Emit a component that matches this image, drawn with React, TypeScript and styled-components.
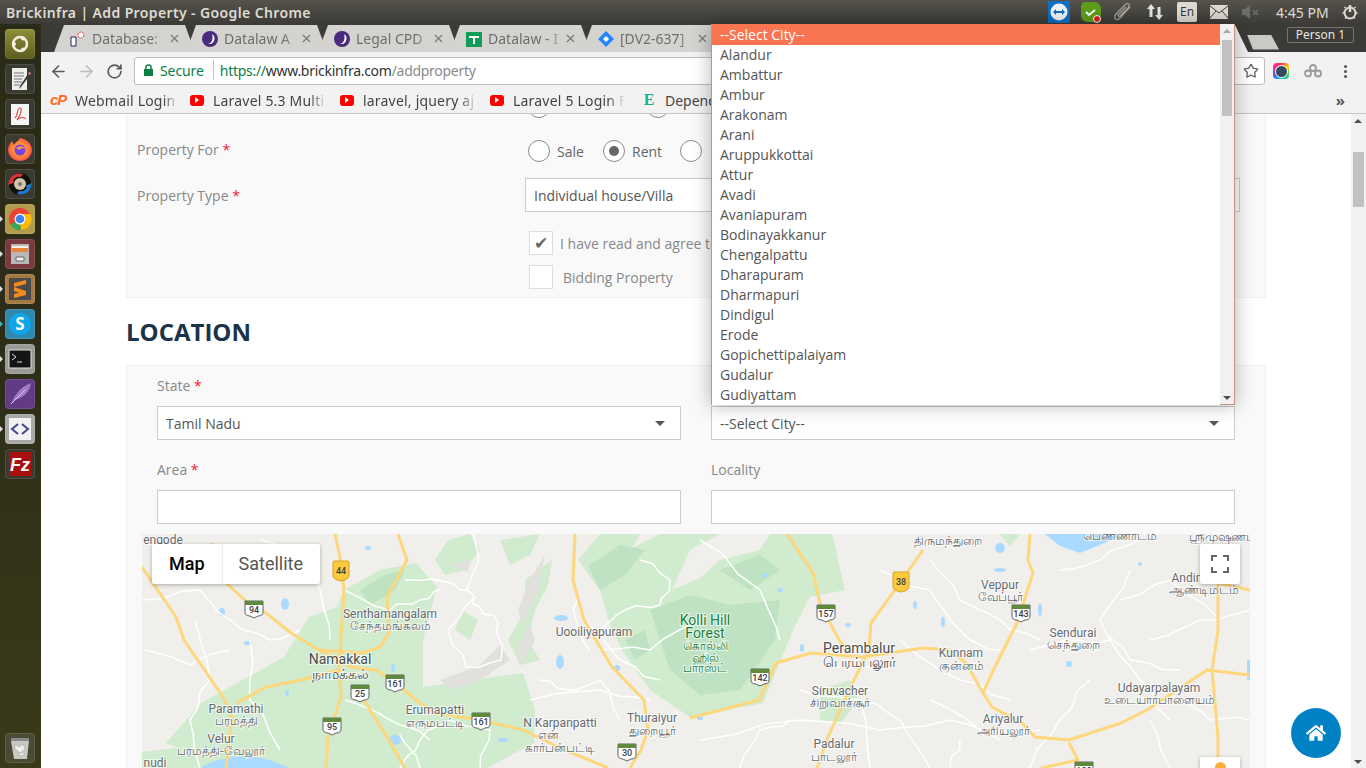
import { type ReactElement, type ReactNode } from "react";
import styled, { createGlobalStyle } from "styled-components";
import { ArrowLeft, ArrowRight, RotateCw, Star, X } from "lucide-react";
import { FaHome } from "react-icons/fa";

const GlobalStyle = createGlobalStyle`
  html, body {
    margin: 0;
    height: 100%;
    overflow: hidden;
    background: #fff;
  }
  * { box-sizing: border-box; }
`;

const UI_FONT = `"Noto Sans", "Open Sans", "Liberation Sans", sans-serif`;
const PAGE_FONT = `"Open Sans", "Noto Sans", sans-serif`;

const Desktop = styled.div`
  position: relative;
  width: 1366px;
  height: 768px;
  overflow: hidden;
  display: flex;
  flex-direction: column;
`;

/* top panel */
const TopPanel = styled.div`
  height: 24px;
  flex: none;
  display: flex;
  align-items: center;
  background: linear-gradient(#55534c, #3c3b37);
  font-family: ${UI_FONT};
`;
const WindowTitle = styled.div`
  margin-left: 6px;
  flex: 1;
  color: #dfdbd2;
  font-size: 14px;
  font-weight: 600;
  letter-spacing: 0.38px;
`;
const TraySlot = styled.div`
  width: 32px;
  height: 24px;
  display: flex;
  align-items: center;
  justify-content: center;
`;
const LangBadge = styled.div`
  width: 20px;
  height: 20px;
  border-radius: 2px;
  background: #dfdbd2;
  color: #3c3b37;
  font-size: 12px;
  text-align: center;
  line-height: 20px;
`;
const Clock = styled.div`
  width: 58px;
  margin-left: 9px;
  color: #dfdbd2;
  font-size: 14px;
`;

const Workspace = styled.div`
  flex: 1;
  display: flex;
  min-height: 0;
`;

/* launcher */
const Launcher = styled.div`
  width: 41px;
  flex: none;
  display: flex;
  flex-direction: column;
  gap: 5px;
  padding: 5px 0 5px 5px;
  background: linear-gradient(#2a2a18, #2c2c18 40%, #3a3a1a);
`;
const Tile = styled.div<{ $bg: string; $pip?: string }>`
  position: relative;
  width: 30px;
  height: 30px;
  flex: none;
  border-radius: 4px;
  background: ${(p) => p.$bg};
  box-shadow: inset 0 0 0 1px rgba(255, 255, 255, 0.1);
  display: flex;
  align-items: center;
  justify-content: center;
  &::before {
    content: "";
    display: ${(p) => (p.$pip ? "block" : "none")};
    position: absolute;
    left: -5px;
    top: 12px;
    border-left: 3px solid ${(p) => p.$pip};
    border-top: 3px solid transparent;
    border-bottom: 3px solid transparent;
  }
`;
const TrashTile = styled(Tile)`
  margin-top: auto;
`;

/* browser chrome */
const Browser = styled.div`
  flex: 1;
  min-width: 0;
  display: flex;
  flex-direction: column;
  font-family: ${UI_FONT};
`;
const TabStrip = styled.div`
  height: 28px;
  flex: none;
  display: flex;
  align-items: flex-end;
  padding-left: 13px;
  background: #3c3b37;
`;
const Tab = styled.div`
  width: 141px;
  height: 27px;
  flex: none;
  margin-right: -9px;
  position: relative;
  display: flex;
  align-items: center;
  padding-left: 16px;
  background: #d5d3d0;
  clip-path: polygon(0 100%, 10px 0, 131px 0, 100% 100%);
`;
const ActiveTab = styled.div`
  flex: 1;
  height: 27px;
  background: #f2f2f2;
  clip-path: polygon(0 100%, 10px 0, calc(100% - 13px) 0, 100% 100%);
`;
const TabIcon = styled.span`
  width: 16px;
  height: 16px;
  flex: none;
  display: flex;
`;
const TabTitle = styled.span`
  margin-left: 6px;
  width: 78px;
  overflow: hidden;
  white-space: nowrap;
  color: #6e6e6e;
  font-size: 14px;
  -webkit-mask-image: linear-gradient(90deg, #000 75%, transparent);
  mask-image: linear-gradient(90deg, #000 75%, transparent);
`;
const TabClose = styled.span`
  position: absolute;
  left: 114px;
  top: 7px;
  display: flex;
  color: #777;
`;
const NewTab = styled.div`
  width: 32px;
  height: 15px;
  flex: none;
  align-self: center;
  margin: 8px 8px 0 -1px;
  background: #cbc9c6;
  clip-path: polygon(0 0, 24px 0, 100% 100%, 6px 100%);
`;
const PersonButton = styled.div`
  width: 67px;
  height: 16px;
  flex: none;
  align-self: flex-start;
  margin: 3px 12px 0 0;
  border: 1px solid #77756f;
  border-radius: 2px;
  color: #e8e6e1;
  font-size: 12px;
  line-height: 14px;
  text-align: center;
`;

const Toolbar = styled.div`
  height: 35px;
  flex: none;
  display: flex;
  align-items: flex-start;
  padding: 5px 0 0 3px;
  background: #f2f2f2;
`;
const NavButton = styled.div<{ $off?: boolean }>`
  width: 28px;
  height: 28px;
  display: flex;
  justify-content: center;
  align-items: center;
  color: ${(p) => (p.$off ? "#bdbdbd" : "#5a5a5a")};
`;
const Omnibox = styled.div`
  width: 1131px;
  height: 28px;
  flex: none;
  margin-left: 6px;
  display: flex;
  align-items: center;
  padding: 0 0 2px 9px;
  background: #fff;
  border: 1px solid #bdbdbd;
  border-radius: 3px;
  font-size: 14px;
  position: relative;
`;
const SecureText = styled.span`
  margin-left: 7px;
  color: #0b8043;
  letter-spacing: -0.1px;
`;
const OmniDivider = styled.span`
  width: 1px;
  height: 20px;
  margin: 0 6px 0 9px;
  background: #c4c4c4;
`;
const UrlText = styled.span`
  letter-spacing: -0.28px;
`;
const UrlScheme = styled.span`
  color: #0b8043;
`;
const UrlHost = styled.span`
  color: #333;
`;
const UrlPath = styled.span`
  color: #8a8a8a;
`;
const OmniStar = styled.span`
  position: absolute;
  right: 5px;
  top: 5px;
  display: flex;
  color: #666;
`;
const ToolbarIcon = styled.div`
  width: 32px;
  height: 28px;
  display: flex;
  justify-content: center;
  align-items: center;
`;
const LensIcon = styled.div`
  width: 16px;
  height: 16px;
  border-radius: 4px;
  background: conic-gradient(#ff2d55, #ffcc00, #34c759, #00c7ff, #5856d6, #ff2d95, #ff2d55);
  display: flex;
  align-items: center;
  justify-content: center;
  &::after {
    content: "";
    width: 11px;
    height: 11px;
    border-radius: 50%;
    background: #34495e;
    box-shadow: 0 0 0 1px #fff;
  }
`;
const MenuDots = styled.div`
  width: 3px;
  height: 3px;
  border-radius: 50%;
  background: #555;
  box-shadow: 0 5px 0 #555, 0 -5px 0 #555;
`;

const BookmarkBar = styled.div`
  height: 27px;
  flex: none;
  display: flex;
  align-items: center;
  padding-left: 9px;
  background: #f2f2f2;
  border-bottom: 1px solid #c6c6c6;
  position: relative;
`;
const Bookmark = styled.div<{ $w: number }>`
  width: ${(p) => p.$w}px;
  flex: none;
  display: flex;
  align-items: center;
  gap: 9px;
  color: #444;
  font-size: 14px;
`;
const BookmarkLabel = styled.span<{ $w: number }>`
  width: ${(p) => p.$w}px;
  overflow: hidden;
  white-space: nowrap;
  letter-spacing: 0.2px;
  -webkit-mask-image: linear-gradient(90deg, #000 85%, transparent);
  mask-image: linear-gradient(90deg, #000 85%, transparent);
`;
const CpanelMark = styled.span`
  width: 16px;
  flex: none;
  color: #ff6c2c;
  font-family: "Liberation Sans", sans-serif;
  font-size: 15px;
  font-weight: 700;
  font-style: italic;
  letter-spacing: -1px;
  line-height: 16px;
`;
const TubeIcon = styled.span`
  width: 14px;
  height: 11px;
  flex: none;
  border-radius: 3px;
  background: #f00;
  display: flex;
  align-items: center;
  justify-content: center;
  &::after {
    content: "";
    border-left: 4px solid #fff;
    border-top: 3px solid transparent;
    border-bottom: 3px solid transparent;
  }
`;
const EvernoteE = styled.span`
  width: 14px;
  flex: none;
  color: #19b394;
  font-family: "Liberation Serif", serif;
  font-weight: 700;
  font-size: 16px;
  text-align: center;
`;
const MoreBookmarks = styled.span`
  position: absolute;
  right: 21px;
  top: 3px;
  color: #555;
  font-size: 15px;
  font-weight: 700;
`;

/* web page */
const Viewport = styled.div`
  flex: 1;
  min-height: 0;
  display: flex;
  background: #fff;
  font-family: ${PAGE_FONT};
  font-size: 14px;
`;
const PageBody = styled.div`
  flex: 1;
  min-width: 0;
  overflow: hidden;
  padding-left: 85px;
`;
const Scrollbar = styled.div`
  width: 15px;
  flex: none;
  position: relative;
  background: #f1f1f1;
`;
const ScrollThumb = styled.div<{ $top: number; $h: number }>`
  position: absolute;
  left: 2px;
  right: 2px;
  top: ${(p) => p.$top}px;
  height: ${(p) => p.$h}px;
  background: #c1c1c1;
`;
const ScrollArrow = styled.div<{ $down?: boolean; $color?: string }>`
  position: absolute;
  left: 3px;
  ${(p) => (p.$down ? "bottom: 4px;" : "top: 5px;")}
  border-left: 4px solid transparent;
  border-right: 4px solid transparent;
  ${(p) => (p.$down ? "border-top" : "border-bottom")}: 4px solid ${(p) => p.$color ?? "#505050"};
`;

const Panel = styled.div`
  width: 1140px;
  background: #f9f9f9;
  border: 1px solid #f1f1f1;
`;
const PropertyPanel = styled(Panel)`
  margin-top: -30px;
  height: 214px;
  padding: 0 10px;
`;
const FormRow = styled.div<{ $h: number }>`
  height: ${(p) => p.$h}px;
  display: grid;
  grid-template-columns: 388px 1fr;
  align-items: center;
`;
const RowLabel = styled.div<{ $raised?: boolean }>`
  color: #888;
  padding-bottom: ${(p) => (p.$raised ? 4 : 0)}px;
`;
const Required = styled.span`
  color: #f0203a;
`;
const RadioGroup = styled.div`
  display: flex;
  align-items: center;
  padding-left: 3px;
`;
const Radio = styled.span<{ $on?: boolean }>`
  width: 22px;
  height: 22px;
  flex: none;
  border-radius: 50%;
  background: #fff;
  border: 1px solid #8c8c8c;
  display: flex;
  align-items: center;
  justify-content: center;
  &::after {
    content: "";
    display: ${(p) => (p.$on ? "block" : "none")};
    width: 10px;
    height: 10px;
    border-radius: 50%;
    background: #666;
  }
`;
const RadioText = styled.span<{ $w: number }>`
  width: ${(p) => p.$w}px;
  padding-left: 7px;
  color: #666;
`;
const Select = styled.div`
  height: 34px;
  display: flex;
  align-items: center;
  justify-content: space-between;
  padding: 0 15px 0 8px;
  background: #fff;
  border: 1px solid #ccc;
  color: #555;
  &::after {
    content: "";
    border-top: 5px solid #555;
    border-left: 5px solid transparent;
    border-right: 5px solid transparent;
  }
`;
const PropertySelect = styled(Select)`
  width: 715px;
`;
const CheckList = styled.div`
  display: flex;
  flex-direction: column;
  gap: 10px;
  margin: 15px 0 0 392px;
`;
const CheckRow = styled.div<{ $gap: number }>`
  display: flex;
  align-items: center;
  height: 24px;
  gap: ${(p) => p.$gap}px;
  color: #888;
  white-space: nowrap;
`;
const CheckBox = styled.span`
  width: 24px;
  height: 24px;
  flex: none;
  background: #fff;
  border: 1px solid #ddd;
  color: #666;
  font-size: 17px;
  line-height: 22px;
  text-align: center;
  font-family: "DejaVu Sans", sans-serif;
`;
const SectionTitle = styled.h2`
  margin: 18px 0 17px 0;
  height: 32px;
  color: #1c3349;
  font-size: 24px;
  line-height: 32px;
  font-weight: 700;
`;
const LocationPanel = styled(Panel)`
  padding: 10px 15px 0;
`;
const FieldGrid = styled.div`
  display: grid;
  grid-template-columns: 524px 524px;
  column-gap: 30px;
  row-gap: 20px;
  padding: 0 15px;
`;
const Field = styled.div`
  display: flex;
  flex-direction: column;
  gap: 10px;
`;
const FieldLabel = styled.div`
  height: 20px;
  line-height: 20px;
  color: #888;
`;
const TextInput = styled.div`
  height: 34px;
  background: #fff;
  border: 1px solid #ccc;
`;

/* map */
const MapFrame = styled.div`
  position: relative;
  height: 260px;
  margin-top: 10px;
  overflow: hidden;
  background: #f1efec;
  font-family: Roboto, sans-serif;
`;
const MapCanvas = styled.svg`
  display: block;
  width: 1108px;
  height: 260px;
`;
const MapLabel = styled.text<{ $forest?: boolean; $big?: boolean }>`
  font-family: Roboto, "Noto Sans", sans-serif;
  font-size: ${(p) => (p.$big ? 14 : 12)}px;
  fill: ${(p) => (p.$forest ? "#188038" : p.$big ? "#4a4d50" : "#666a6e")};
  stroke: #fff;
  stroke-width: 2px;
  stroke-opacity: 0.7;
  paint-order: stroke;
  text-anchor: middle;
  dominant-baseline: central;
`;
const ShieldText = styled.text`
  font-family: Roboto, sans-serif;
  font-size: 9px;
  font-weight: 500;
  fill: #3c4043;
  text-anchor: middle;
`;
const MapTypeBar = styled.div`
  position: absolute;
  left: 10px;
  top: 10px;
  height: 40px;
  display: flex;
  background: #fff;
  border-radius: 2px;
  box-shadow: 0 1px 4px rgba(0, 0, 0, 0.3);
  font-size: 18px;
  line-height: 40px;
`;
const MapTypeButton = styled.div<{ $on?: boolean }>`
  padding: 0 17px;
  color: ${(p) => (p.$on ? "#000" : "#565656")};
  font-weight: ${(p) => (p.$on ? 500 : 400)};
  box-shadow: ${(p) => (p.$on ? "none" : "inset 1px 0 #eee")};
`;
const MapControl = styled.div`
  position: absolute;
  left: 1058px;
  width: 40px;
  height: 40px;
  background: #fff;
  border-radius: 2px;
  box-shadow: 0 1px 4px rgba(0, 0, 0, 0.3);
  display: flex;
  justify-content: center;
`;
const FullscreenControl = styled(MapControl)`
  top: 10px;
  align-items: center;
`;
const PegmanControl = styled(MapControl)`
  top: 223px;
  padding-top: 5px;
  &::after {
    content: "";
    width: 11px;
    height: 11px;
    border-radius: 50%;
    background: #fbb03b;
  }
`;

/* overlays */
const CityDropdown = styled.div`
  position: absolute;
  left: 711px;
  top: 24px;
  width: 524px;
  height: 381px;
  display: flex;
  background: #fff;
  border: 1px solid #c9907f;
  border-top: 0;
  box-shadow: 0 0 18px rgba(0, 0, 0, 0.3);
  font-family: ${PAGE_FONT};
  font-size: 14px;
`;
const OptionList = styled.div`
  flex: 1;
  min-width: 0;
`;
const Option = styled.div<{ $on?: boolean }>`
  height: ${(p) => (p.$on ? 21 : 20)}px;
  padding-left: 8px;
  line-height: ${(p) => (p.$on ? 21 : 20)}px;
  color: ${(p) => (p.$on ? "#fff" : "#555")};
  background: ${(p) => (p.$on ? "#f97450" : "#fff")};
`;
const OptionScroll = styled(Scrollbar)`
  width: 14px;
`;
const HomeButton = styled.div`
  position: absolute;
  left: 1291px;
  top: 708px;
  width: 50px;
  height: 50px;
  border-radius: 50%;
  background: #0081c6;
  color: #fff;
  display: flex;
  align-items: center;
  justify-content: center;
`;

const CITIES = [
  "--Select City--", "Alandur", "Ambattur", "Ambur", "Arakonam", "Arani", "Aruppukkottai", "Attur", "Avadi",
  "Avaniapuram", "Bodinayakkanur", "Chengalpattu", "Dharapuram", "Dharmapuri", "Dindigul", "Erode",
  "Gopichettipalaiyam", "Gudalur", "Gudiyattam",
];

const YELLOW_ROADS = [
  "142,567 176,617 184,640 223,697 232,717 226,768",
  "335,534 341,563 344,590 341,637 339,667 341,697 328,737 326,768",
  "212,543 226,583 248,603 266,613 291,633 319,650 351,667 376,670 394,682 416,700 434,713 480,720 523,730 558,747 608,768",
  "398,534 407,560 387,597 389,633 380,647 362,653 319,650",
  "339,670 301,680 266,687 237,703",
  "362,697 387,737 405,768",
  "575,534 573,580 584,620 612,667 644,700 648,730 641,750 630,768",
  "787,534 813,573 821,607 841,643 852,652",
  "923,550 897,587 871,623 869,650 854,680 828,737 817,768",
  "690,718 759,700 765,687 776,663 811,653 862,657 923,648 949,650 966,663 983,693 992,707 1022,723 1035,737 1069,740 1121,723 1147,710 1207,670 1250,675",
  "1030,534 1028,560 1033,573 1017,623 992,673 983,693",
  "1218,563 1218,630 1212,670 1218,737 1218,768",
  "1069,743 1078,760 1041,768",
  "1218,583 1250,590",
];

const WHITE_ROADS = [
  "260,540 300,560 320,590 330,640", "142,600 200,590 230,620 270,640 300,630", "195,620 210,680 190,720 200,768",
  "344,590 390,610 420,600 440,590", "590,625 620,660 660,680", "600,650 650,650 700,620",
  "480,768 490,730 450,720 420,740 400,768", "530,700 600,690 650,700", "345,700 390,720 430,740",
  "700,540 760,590 780,640", "880,570 930,590 950,620 970,640 1000,650", "930,560 960,600 1000,620 1040,640",
  "900,640 960,680 1010,700", "1030,650 1080,640 1110,640 1140,680 1170,720", "1090,680 1060,720 1030,768",
  "1120,600 1170,580 1220,620", "1150,640 1200,620 1250,610", "1130,570 1100,620 1130,660 1180,670",
  "700,740 800,720 880,730 950,720 1000,740", "960,740 950,768", "1150,720 1170,768", "860,700 900,720 930,768",
  "740,768 760,730 790,720", "1180,700 1210,720 1250,720", "930,700 980,730 1040,730",
  "473,534 478,563 467,590 480,607 498,623 501,660 466,667 448,630 476,597", "405,580 451,583 467,590",
  "574,585 576,620 590,650", "600,630 625,610 660,605 670,580 640,560", "145,650 190,665 230,650", "250,640 250,700 280,750",
  "400,735 420,768", "540,680 570,690 600,680 620,720", "1060,570 1100,560 1140,540", "800,690 860,700 870,768",
];

const WATER = [
  [285, 604, 4, 6], [222, 612, 3, 4], [248, 643, 4, 2], [393, 668, 2, 4], [287, 693, 2, 3], [368, 548, 3, 2],
  [561, 618, 7, 3], [560, 662, 4, 7], [617, 668, 3, 3], [395, 740, 6, 5], [503, 740, 5, 2], [765, 575, 3, 2],
  [780, 590, 3, 2], [848, 625, 3, 2], [943, 622, 2, 5], [915, 605, 2, 4], [1000, 570, 6, 2], [1040, 610, 2, 7],
  [1060, 540, 2, 4], [1069, 664, 3, 3], [802, 648, 2, 4], [700, 718, 3, 2], [1000, 548, 5, 5], [1140, 564, 2, 2],
];

const PALE_PATCHES = [
  "M344 590L380 570 416 563 437 587 423 640 423 687 523 673 535 710 534 743 487 768H226L166 743 201 703 284 657 309 617 337 607Z",
  "M578 560L600 534H640L632 548 660 534H720L690 550 672 590 700 578 720 560 760 550 770 534H832L845 590 810 597 793 630 763 703 690 717 650 690 622 650 610 625 600 590Z",
  "M448 540L470 534 480 550 465 570 445 575 435 560Z",
  "M500 540L540 534 530 555 510 565Z",
  "M525 580L552 560 548 585 535 610 528 640 540 660 520 665 508 640 525 610Z",
  "M142 752L200 745 226 768H142Z",
  "M820 690L850 680 858 700 840 725 820 720Z",
  "M1000 534H1020L1010 546Z",
  "M462 610L478 620 470 640 455 630Z",
];

const DARK_PATCHES = [
  "M588 566L620 545 645 550 625 575 600 590Z",
  "M650 610L690 595 730 605 780 600 775 640 740 690 700 695 670 670Z",
  "M625 640L645 630 650 650 635 660Z",
  "M360 590L385 575 405 570 395 590 370 605Z",
  "M720 570L760 555 780 570 750 590Z",
];

const TERRAIN_PATCHES = [
  "M440 680L480 665 500 645 510 660 480 680 450 690Z",
  "M530 580L545 555 538 590 522 625 518 610Z",
  "M450 565L470 560 468 572Z",
  "M516 650L530 625 535 640 522 665Z",
];

/* breaks a road into short wobbling pieces so it does not read as a ruler line */
function wobble(points: string): string {
  const pts = points.split(" ").map((p) => p.split(",").map(Number));
  const out: string[] = [];
  pts.forEach(([x, y], i) => {
    out.push(`${x},${y}`);
    const next = pts[i + 1];
    if (!next) return;
    for (let k = 1; k < 3; k += 1) {
      const t = k / 3;
      const dx = Math.sin(x * 0.7 + k * 2.1) * 3;
      const dy = Math.cos(y * 0.9 + k * 1.3) * 3;
      out.push(`${x + (next[0] - x) * t + dx},${y + (next[1] - y) * t + dy}`);
    }
  });
  return out.join(" ");
}

const LABELS: { x: number; y: number; t: string; big?: boolean; forest?: boolean }[] = [
  { x: 163, y: 540, t: "engode" }, { x: 390, y: 614, t: "Senthamangalam" }, { x: 390, y: 626, t: "சேந்தமங்கலம்" },
  { x: 340, y: 659, t: "Namakkal", big: true }, { x: 340, y: 674, t: "நாமக்கல்", big: true },
  { x: 236, y: 709, t: "Paramathi" }, { x: 236, y: 721, t: "பரமத்தி" }, { x: 221, y: 739, t: "Velur" },
  { x: 221, y: 751, t: "பரமத்தி-வேலூர்" }, { x: 155, y: 763, t: "nudi" }, { x: 594, y: 632, t: "Uooiliyapuram" },
  { x: 435, y: 710, t: "Erumapatti" }, { x: 435, y: 723, t: "எருமபட்டி" }, { x: 560, y: 723, t: "N Karpanpatti" },
  { x: 548, y: 735, t: "என்" }, { x: 560, y: 748, t: "கார்பன்பட்டி" }, { x: 652, y: 718, t: "Thuraiyur" },
  { x: 652, y: 731, t: "துறையூர்" }, { x: 705, y: 620, t: "Kolli Hill", forest: true, big: true },
  { x: 705, y: 633, t: "Forest", forest: true, big: true }, { x: 705, y: 646, t: "கொல்லி", forest: true },
  { x: 705, y: 658, t: "ஹில்", forest: true }, { x: 705, y: 668, t: "பாரஸ்ட்", forest: true },
  { x: 859, y: 648, t: "Perambalur", big: true }, { x: 859, y: 662, t: "பெரம்பலூர்", big: true },
  { x: 961, y: 653, t: "Kunnam" }, { x: 961, y: 666, t: "குன்னம்" }, { x: 840, y: 691, t: "Siruvacher" },
  { x: 840, y: 703, t: "சிறுவாச்சூர்" }, { x: 834, y: 744, t: "Padalur" }, { x: 834, y: 757, t: "பாடலூர்" },
  { x: 1000, y: 585, t: "Veppur" }, { x: 1000, y: 597, t: "வேப்பூர்" }, { x: 1073, y: 633, t: "Sendurai" },
  { x: 1073, y: 645, t: "செந்துறை" }, { x: 1159, y: 688, t: "Udayarpalayam" }, { x: 1159, y: 700, t: "உடையார்பாளையம்" },
  { x: 1003, y: 719, t: "Ariyalur" }, { x: 1003, y: 731, t: "அரியலூர்" }, { x: 1204, y: 578, t: "Andimadam" },
  { x: 1204, y: 590, t: "ஆண்டிமடம்" }, { x: 948, y: 541, t: "திருமந்துறை" }, { x: 1120, y: 536, t: "பெண்ணாடம்" },
  { x: 1222, y: 537, t: "ஸ்ரீமுஷ்ணம்" },
];

const NH_SHIELDS = [
  { x: 254, y: 609, n: "94" }, { x: 395, y: 683, n: "161" }, { x: 360, y: 693, n: "25" }, { x: 332, y: 726, n: "95" },
  { x: 481, y: 721, n: "161" }, { x: 627, y: 752, n: "30" }, { x: 760, y: 677, n: "142" }, { x: 826, y: 613, n: "157" },
  { x: 1021, y: 613, n: "143" }, { x: 1084, y: 770, n: "100" },
];

function NhShield({ x, y, n }: { x: number; y: number; n: string }): ReactElement {
  return (
    <g transform={`translate(${x} ${y})`}>
      <path d="M-9 -8H9V3Q9 7 4 7L0 9L-4 7Q-9 7 -9 3Z" fill="#fff" stroke="#5f6368" />
      <path d="M-9 -8H9V-4H-9Z" fill="#5f8a3c" />
      <ShieldText y={4}>{n}</ShieldText>
    </g>
  );
}

function StateShield({ x, y, n }: { x: number; y: number; n: string }): ReactElement {
  return (
    <g transform={`translate(${x} ${y})`}>
      <path d="M-7 -10H7Q8 -10 8 -8V5Q8 7 4 9L0 10L-4 9Q-8 7 -8 5V-8Q-8 -10 -7 -10Z" fill="#fdc93e" stroke="#d9a520" />
      <ShieldText y={3}>{n}</ShieldText>
    </g>
  );
}

function MapArt(): ReactElement {
  return (
    <MapCanvas viewBox="142 534 1108 260">
      <rect x="142" y="534" width="1108" height="260" fill="#f1efec" />
      <g fill="#d0ebcd">
        {PALE_PATCHES.map((d) => (
          <path key={d} d={d} />
        ))}
      </g>
      <g fill="#bfe3c2">
        {DARK_PATCHES.map((d) => (
          <path key={d} d={d} />
        ))}
      </g>
      <g fill="#e2e0dc">
        {TERRAIN_PATCHES.map((d) => (
          <path key={d} d={d} />
        ))}
      </g>
      <g fill="#aadaff">
        {WATER.map(([cx, cy, rx, ry]) => (
          <ellipse key={`${cx}-${cy}`} cx={cx} cy={cy} rx={rx} ry={ry} />
        ))}
        <path d="M1045 534H1125L1100 545 1080 553 1060 546Z" />
        <path d="M200 768Q230 750 270 760L290 768Z" />
        <path d="M1247 660H1250V680H1247Z" />
      </g>
      <g fill="none" stroke="#fff" strokeWidth="1.5" strokeLinejoin="round">
        {WHITE_ROADS.map((pts) => (
          <polyline key={pts} points={wobble(pts)} />
        ))}
      </g>
      <g fill="none" stroke="#fdd77c" strokeWidth="3" strokeLinejoin="round">
        {YELLOW_ROADS.map((pts) => (
          <polyline key={pts} points={pts} />
        ))}
      </g>
      {LABELS.map((l) => (
        <MapLabel key={l.t} x={l.x} y={l.y} $big={l.big} $forest={l.forest}>
          {l.t}
        </MapLabel>
      ))}
      {NH_SHIELDS.map((s) => (
        <NhShield key={`${s.x}`} {...s} />
      ))}
      <StateShield x={341} y={571} n="44" />
      <StateShield x={901} y={582} n="38" />
    </MapCanvas>
  );
}

function LauncherIcons(): ReactElement {
  return (
    <>
      <Tile $bg="linear-gradient(#8f8f3a,#5c5c1c)">
        <svg width="22" height="22" viewBox="0 0 22 22">
          <circle cx="11" cy="11" r="7" fill="none" stroke="#f3f0e0" strokeWidth="2.5" />
          <circle cx="5" cy="11" r="2" fill="#f3f0e0" />
          <circle cx="14" cy="5.5" r="2" fill="#f3f0e0" />
          <circle cx="14" cy="16.5" r="2" fill="#f3f0e0" />
        </svg>
      </Tile>
      <Tile $bg="#3a3a30">
        <svg width="24" height="26" viewBox="0 0 24 26">
          <path d="M4 2H19V24H4Z" fill="#eeeeea" />
          <path d="M6 7H16M6 10H16M6 13H14M6 16H14M6 19H12" stroke="#777" />
          <path d="M22 9L13 21 11 23 12 20 20 8Z" fill="#333" />
          <path d="M22 9L20 8 21 6 23 7Z" fill="#d88" />
        </svg>
      </Tile>
      <Tile $bg="#3a3a30">
        <svg width="24" height="26" viewBox="0 0 24 26">
          <path d="M3 3H21V24H3Z" fill="#f4f4f4" />
          <path d="M7 17C10 14 9 7 12 7S12 15 9 19C13 15 17 17 18 18" fill="none" stroke="#d22" strokeWidth="1" />
        </svg>
      </Tile>
      <Tile $bg="#3c3c30">
        <svg width="26" height="26" viewBox="0 0 26 26">
          <defs>
            <radialGradient id="fx" cx="0.5" cy="0.5" r="0.6">
              <stop offset="0" stopColor="#ffbd3f" />
              <stop offset="0.7" stopColor="#ff7139" />
              <stop offset="1" stopColor="#e31587" />
            </radialGradient>
          </defs>
          <path d="M13 2C20 3 25 8 25 14A12 11 0 0 1 1 14C1 10 3 7 5 5L7 9C9 5 12 5 13 2Z" fill="url(#fx)" />
          <circle cx="13" cy="14" r="5.5" fill="#7542e5" />
          <path d="M9 12Q15 8 19 13Q15 11 12 14Z" fill="#ff9640" />
        </svg>
      </Tile>
      <Tile $bg="#3a3a30">
        <svg width="26" height="26" viewBox="0 0 26 26">
          <circle cx="13" cy="13" r="11" fill="#111" />
          <circle cx="13" cy="13" r="6" fill="#cfc7a8" />
          <circle cx="13" cy="13" r="2" fill="#777" />
          <path d="M2 10C4 4 10 1 16 3L14 6C10 5 7 7 6 10L8 11 1 14Z" fill="#d33" />
          <path d="M24 16C22 22 16 25 10 23L12 20C16 21 19 19 20 16L18 15 25 12Z" fill="#27c" />
        </svg>
      </Tile>
      <Tile $bg="#b29c4c" $pip="#ddd">
        <svg width="24" height="24" viewBox="0 0 24 24">
          <circle cx="12" cy="12" r="11" fill="#ea4335" />
          <path d="M12 12L2.5 17.5A11 11 0 0 0 13 23Z" fill="#34a853" />
          <path d="M12 12L13 23A11 11 0 0 0 22.5 7H12Z" fill="#fbbc05" />
          <circle cx="12" cy="12" r="5.5" fill="#fff" />
          <circle cx="12" cy="12" r="4.3" fill="#4285f4" />
        </svg>
      </Tile>
      <Tile $bg="#7a3a3e" $pip="#ddd">
        <svg width="22" height="24" viewBox="0 0 22 24">
          <path d="M2 2H20V22H2Z" fill="#b8b8b8" />
          <path d="M3 4H19V10H3Z" fill="#e8843c" />
          <path d="M3 4H19V6H3Z" fill="#f4f0e8" />
          <path d="M7 15H15V19H7Z" fill="#eee" stroke="#666" />
        </svg>
      </Tile>
      <Tile $bg="#a47a42" $pip="#ddd">
        <svg width="24" height="24" viewBox="0 0 24 24">
          <path d="M1 1H23V23H1Z" fill="#4a4a4a" />
          <path d="M6 10V6L18 3V7ZM6 10L18 14V18L6 14ZM6 17L18 14V18L6 21Z" fill="#f58a1f" />
        </svg>
      </Tile>
      <Tile $bg="#2f89ad" $pip="#4ab">
        <svg width="24" height="24" viewBox="0 0 24 24">
          <circle cx="12" cy="12" r="11" fill="#0ea5e9" />
          <text x="12" y="18" fontSize="17" fontWeight="700" fill="#fff" textAnchor="middle" fontFamily="Open Sans, sans-serif">
            S
          </text>
        </svg>
      </Tile>
      <Tile $bg="#9a9a96" $pip="#ddd">
        <svg width="24" height="20" viewBox="0 0 24 20">
          <path d="M1 1H23V19H1Z" fill="#141414" stroke="#ddd" />
          <path d="M4 5L8 8 4 11" fill="none" stroke="#ddd" />
          <path d="M9 13H14" stroke="#ddd" />
        </svg>
      </Tile>
      <Tile $bg="#633b85">
        <svg width="24" height="24" viewBox="0 0 24 24">
          <path d="M3 22C6 14 12 5 23 1C22 9 15 17 6 18Z" fill="#9f7cc4" />
          <path d="M3 22L17 8" stroke="#d8c8e8" />
        </svg>
      </Tile>
      <Tile $bg="#a8a8a6" $pip="#ddd">
        <svg width="24" height="24" viewBox="0 0 24 24">
          <path d="M1 1H23V23H1Z" fill="#f2f2f4" />
          <path d="M10 7L4 12 10 17M14 7L20 12 14 17" fill="none" stroke="#44448c" strokeWidth="2" />
        </svg>
      </Tile>
      <Tile $bg="#3a3a30">
        <svg width="24" height="26" viewBox="0 0 24 26">
          <path d="M1 1H23V25H1Z" fill="#a80f0f" />
          <text x="12" y="20" fontSize="18" fontWeight="700" fontStyle="italic" fill="#fff" textAnchor="middle" fontFamily="Liberation Sans, sans-serif">
            Fz
          </text>
        </svg>
      </Tile>
      <TrashTile $bg="#4b4b34">
        <svg width="22" height="26" viewBox="0 0 22 26">
          <path d="M2 3H20V6L18 24H5L2 6Z" fill="#c8c8c4" />
          <path d="M2 3H20V6H2Z" fill="#888" />
          <path d="M6 9L10 12 14 9 16 14 11 18 6 14ZM8 19L13 21 16 18" fill="#f0f0ee" stroke="#999" strokeWidth="0.5" />
        </svg>
      </TrashTile>
    </>
  );
}

const Crescent = (
  <svg width="16" height="16" viewBox="0 0 16 16">
    <circle cx="8" cy="8" r="8" fill="#4a2a7f" />
    <path d="M10 3A5.5 5.5 0 0 1 6 13C10 12.5 11.5 7 10 3Z" fill="#fff" />
  </svg>
);

const TABS: { title: string; icon: ReactNode }[] = [
  {
    title: "Database:",
    icon: (
      <svg width="16" height="16" viewBox="0 0 16 16">
        <path d="M1 6H6V15H1Z" fill="#fff" stroke="#226" />
        <circle cx="11" cy="4" r="3" fill="#fff" stroke="#d33" strokeDasharray="2 1" />
      </svg>
    ),
  },
  { title: "Datalaw A", icon: Crescent },
  { title: "Legal CPD", icon: Crescent },
  {
    title: "Datalaw - I",
    icon: (
      <svg width="16" height="16" viewBox="0 0 16 16">
        <path d="M0 1H16V16H0Z" fill="#0f9d58" />
        <path d="M3 5H13V7H9V13H7V7H3Z" fill="#fff" />
      </svg>
    ),
  },
  {
    title: "[DV2-637]",
    icon: (
      <svg width="16" height="16" viewBox="0 0 16 16">
        <path d="M8 0L16 8 8 16 0 8Z" fill="#2684ff" />
        <path d="M8 5L11 8 8 11 5 8Z" fill="#fff" />
      </svg>
    ),
  },
];

export default function App(): ReactElement {
  return (
    <Desktop>
      <GlobalStyle />
      <TopPanel>
        <WindowTitle>Brickinfra | Add Property - Google Chrome</WindowTitle>
        <TraySlot>
          <svg width="22" height="22" viewBox="0 0 22 22">
            <path d="M0 0H22V22H0Z" fill="#0e6fc4" />
            <circle cx="11" cy="11" r="8.5" fill="#eef5fb" />
            <path d="M5 11L8 8V10H14V8L17 11 14 14V12H8V14Z" fill="#0e6fc4" />
          </svg>
        </TraySlot>
        <TraySlot>
          <svg width="22" height="22" viewBox="0 0 22 22">
            <path d="M1 6Q1 1 6 1H14Q21 1 21 9V14Q21 21 14 21H8Q1 21 1 14Z" fill="#5d9f1a" />
            <path d="M6 11L9 14 15 9" fill="none" stroke="#fff" strokeWidth="2" />
            <circle cx="17" cy="18" r="3.5" fill="#e51c1c" stroke="#fff" />
          </svg>
        </TraySlot>
        <TraySlot>
          <svg width="20" height="20" viewBox="0 0 20 20">
            <path d="M17 5L7 16Q4 19 2 16.500Q1 14 3 12L13 2Q15 1 16 2.500Q17 4 15 6L7 14Q5 15 5 13L13 5" fill="none" stroke="#a5a39c" strokeWidth="1.2" />
          </svg>
        </TraySlot>
        <TraySlot>
          <svg width="18" height="18" viewBox="0 0 18 18">
            <path d="M5 1L9 6H6.500V14H3.500V6H1ZM13 17L9 12H11.500V4H14.500V12H17Z" fill="#e8e6e1" />
          </svg>
        </TraySlot>
        <TraySlot>
          <LangBadge>En</LangBadge>
        </TraySlot>
        <TraySlot>
          <svg width="18" height="14" viewBox="0 0 18 14">
            <path d="M0 0H18V14H0Z" fill="#dfdbd2" />
            <path d="M0 1L9 8 18 1M0 13L6 6M18 13L12 6" fill="none" stroke="#3c3b37" />
          </svg>
        </TraySlot>
        <TraySlot>
          <svg width="18" height="14" viewBox="0 0 18 14">
            <path d="M0 4H3L8 0V14L3 10H0Z" fill="#6c6b65" />
            <path d="M11 5L16 10M16 5L11 10" stroke="#6c6b65" strokeWidth="1.6" />
          </svg>
        </TraySlot>
        <Clock>4:45 PM</Clock>
        <TraySlot>
          <svg width="18" height="18" viewBox="0 0 18 18">
            <circle cx="9" cy="10" r="5.500" fill="none" stroke="#dfdbd2" strokeWidth="2" />
            <path d="M9 2V9" stroke="#dfdbd2" strokeWidth="2.500" />
            <path d="M1.500 10H3M15 10H16.500M3.500 4L4.500 5M14.500 4L13.500 5M4 15.500L5 14.500M14 15.500L13 14.500" stroke="#dfdbd2" strokeWidth="1.600" />
          </svg>
        </TraySlot>
      </TopPanel>
      <Workspace>
        <Launcher>
          <LauncherIcons />
        </Launcher>
        <Browser>
          <TabStrip>
            {TABS.map((tab) => (
              <Tab key={tab.title}>
                <TabIcon>{tab.icon}</TabIcon>
                <TabTitle>{tab.title}</TabTitle>
                <TabClose>
                  <X size={13} />
                </TabClose>
              </Tab>
            ))}
            <ActiveTab />
            <NewTab />
            <PersonButton>Person 1</PersonButton>
          </TabStrip>
          <Toolbar>
            <NavButton>
              <ArrowLeft size={19} />
            </NavButton>
            <NavButton $off>
              <ArrowRight size={19} />
            </NavButton>
            <NavButton>
              <RotateCw size={17} strokeWidth={2.4} />
            </NavButton>
            <Omnibox>
              <svg width="9" height="12" viewBox="0 0 9 12">
                <path d="M0 5H9V12H0Z" fill="#0b8043" />
                <path d="M2 5V3Q2 1 4.500 1T7 3V5" fill="none" stroke="#0b8043" strokeWidth="1.500" />
              </svg>
              <SecureText>Secure</SecureText>
              <OmniDivider />
              <UrlText>
                <UrlScheme>https://</UrlScheme>
                <UrlHost>www.brickinfra.com</UrlHost>
                <UrlPath>/addproperty</UrlPath>
              </UrlText>
              <OmniStar>
                <Star size={16} />
              </OmniStar>
            </Omnibox>
            <ToolbarIcon>
              <LensIcon />
            </ToolbarIcon>
            <ToolbarIcon>
              <svg width="18" height="14" viewBox="0 0 18 14">
                <g fill="none" stroke="#9a9a9a" strokeWidth="1.800">
                  <circle cx="4" cy="9.500" r="3" />
                  <circle cx="9" cy="4" r="3" />
                  <circle cx="14" cy="9.500" r="3" />
                </g>
              </svg>
            </ToolbarIcon>
            <ToolbarIcon>
              <MenuDots />
            </ToolbarIcon>
          </Toolbar>
          <BookmarkBar>
            <Bookmark $w={140}>
              <CpanelMark>cP</CpanelMark>
              <BookmarkLabel $w={104}>Webmail Login</BookmarkLabel>
            </Bookmark>
            <Bookmark $w={150}>
              <TubeIcon />
              <BookmarkLabel $w={114}>Laravel 5.3 Multi</BookmarkLabel>
            </Bookmark>
            <Bookmark $w={150}>
              <TubeIcon />
              <BookmarkLabel $w={114}>laravel, jquery aj</BookmarkLabel>
            </Bookmark>
            <Bookmark $w={152}>
              <TubeIcon />
              <BookmarkLabel $w={112}>Laravel 5 Login F</BookmarkLabel>
            </Bookmark>
            <Bookmark $w={120}>
              <EvernoteE>E</EvernoteE>
              Depende
            </Bookmark>
            <MoreBookmarks>»</MoreBookmarks>
          </BookmarkBar>
          <Viewport>
            <PageBody>
              <PropertyPanel>
                <FormRow $h={43}>
                  <span />
                  <RadioGroup>
                    <Radio />
                    <RadioText $w={97} />
                    <Radio />
                  </RadioGroup>
                </FormRow>
                <FormRow $h={46}>
                  <RowLabel $raised>
                    Property For <Required>*</Required>
                  </RowLabel>
                  <RadioGroup>
                    <Radio />
                    <RadioText $w={53}>Sale</RadioText>
                    <Radio $on />
                    <RadioText $w={55}>Rent</RadioText>
                    <Radio />
                  </RadioGroup>
                </FormRow>
                <FormRow $h={42}>
                  <RowLabel>
                    Property Type <Required>*</Required>
                  </RowLabel>
                  <PropertySelect>Individual house/Villa</PropertySelect>
                </FormRow>
                <CheckList>
                  <CheckRow $gap={7}>
                    <CheckBox>✔</CheckBox>I have read and agree to
                  </CheckRow>
                  <CheckRow $gap={10}>
                    <CheckBox />
                    Bidding Property
                  </CheckRow>
                </CheckList>
              </PropertyPanel>
              <SectionTitle>LOCATION</SectionTitle>
              <LocationPanel>
                <FieldGrid>
                  <Field>
                    <FieldLabel>
                      State <Required>*</Required>
                    </FieldLabel>
                    <Select>Tamil Nadu</Select>
                  </Field>
                  <Field>
                    <FieldLabel>City</FieldLabel>
                    <Select>--Select City--</Select>
                  </Field>
                  <Field>
                    <FieldLabel>
                      Area <Required>*</Required>
                    </FieldLabel>
                    <TextInput />
                  </Field>
                  <Field>
                    <FieldLabel>Locality</FieldLabel>
                    <TextInput />
                  </Field>
                </FieldGrid>
                <MapFrame>
                  <MapArt />
                  <MapTypeBar>
                    <MapTypeButton $on>Map</MapTypeButton>
                    <MapTypeButton>Satellite</MapTypeButton>
                  </MapTypeBar>
                  <FullscreenControl>
                    <svg width="18" height="18" viewBox="0 0 18 18">
                      <path d="M1 6V1H6M12 1H17V6M17 12V17H12M6 17H1V12" fill="none" stroke="#666" strokeWidth="2" />
                    </svg>
                  </FullscreenControl>
                  <PegmanControl />
                </MapFrame>
              </LocationPanel>
            </PageBody>
            <Scrollbar>
              <ScrollArrow />
              <ScrollThumb $top={38} $h={55} />
              <ScrollArrow $down />
            </Scrollbar>
          </Viewport>
        </Browser>
      </Workspace>
      <CityDropdown>
        <OptionList>
          {CITIES.map((city, i) => (
            <Option key={city} $on={i === 0}>
              {city}
            </Option>
          ))}
        </OptionList>
        <OptionScroll>
          <ScrollArrow $color="#a8a8a8" />
          <ScrollThumb $top={16} $h={76} />
          <ScrollArrow $down />
        </OptionScroll>
      </CityDropdown>
      <HomeButton>
        <FaHome size={20} />
      </HomeButton>
    </Desktop>
  );
}
